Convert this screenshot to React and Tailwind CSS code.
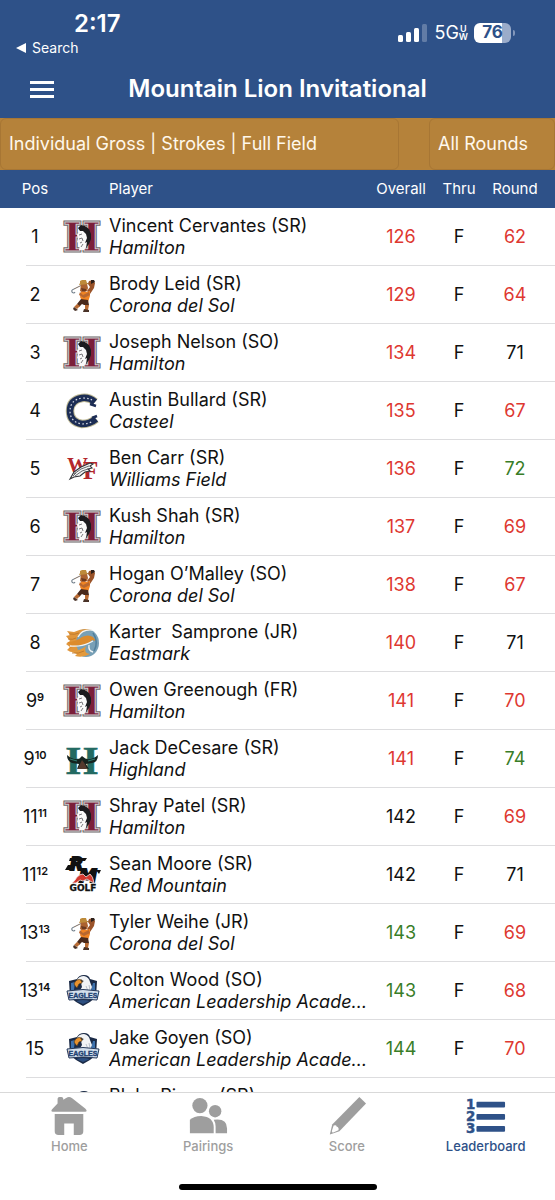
import React from "react";

const logoClass = "h-9 w-10 overflow-visible";

function HuskyH() {
  return (
    <svg viewBox="0 0 40 36" className={logoClass} aria-hidden="true">
      <g fontFamily="DejaVu Serif" fontWeight="700" fontSize="40" textAnchor="middle">
        <text x="20" y="32" fill="#6e6a6c" stroke="#6e6a6c" strokeWidth="3">H</text>
        <text x="20" y="32" fill="#7b1f3a" stroke="#cfcbcc" strokeWidth="1">H</text>
      </g>
      <path d="M20 8 L17 12 L15 16 L16 20 L15 23 L18 25 L17 31 L22 31 L25 27 L27 21 L26 13Z" fill="#f9f9f9" />
      <path d="M16 9 L19 6 L23 7 L27 10 L29 15 L29 20 L27 25 L24 29 L25 23 L23 24 L25 19 L24 15 L21 12 L18 12 Z" fill="#1b1b1e" />
      <path d="M17 16 L20 15 M17 20 L20 19 L21 22 M18 24 L20 23 M19 28 L21 25" fill="none" stroke="#6b6b6f" strokeWidth=".9" />
    </svg>
  );
}

function Golfer() {
  return (
    <svg viewBox="0 0 40 36" className={logoClass} aria-hidden="true">
      <path d="M31 5 L20 8 L12 12" fill="none" stroke="#6a5a50" strokeWidth=".9" />
      <path d="M12 12 Q9 13 10 15 Q12 17 13 15" fill="none" stroke="#73808c" strokeWidth="1.1" />
      <path d="M27 4 L31 3 L33 6 L32 11 L28 17 L25 14 L28 10 L26 7Z" fill="#9a5329" />
      <path d="M29 3 L32 3 L33 5 L29 7Z" fill="#2e211b" />
      <path d="M19 7 L25 7 L26 11 L25 14 L21 16 L18 14Z" fill="#ab622f" />
      <path d="M18 4 L20 3 L22 3 L24 3 L25 6 L27 7 L17 8 L18 6Z" fill="#bd8a3a" />
      <path d="M19 11 L24 12 L24 14 L20 14Z" fill="#6b3a20" />
      <path d="M19 15 L24 15 L28 14 L28 19 L26 25 L20 24 L18 20 Z" fill="#f08424" />
      <path d="M18 15 L21 18 L27 15 L28 18 L22 21 L17 18Z" fill="#b8672f" />
      <path d="M19 22 L26 23 L27 28 L22 28 L20 27 L17 30 L15 27Z" fill="#4a2a1c" />
      <path d="M15 27 L18 29 L15 32 L12 30 Z M23 28 L27 28 L26 33 L23 33Z" fill="#b96b33" />
      <path d="M12 30 L16 33 L13 34 L11 32Z M22 32 L27 33 L27 35 L21 35Z" fill="#493227" />
    </svg>
  );
}

function Horseshoe() {
  return (
    <svg viewBox="0 0 40 36" className={logoClass} aria-hidden="true">
      <g fill="none">
        <path d="M33 9 Q27 4 20 5 Q8 7 8 18 Q8 29 20 31 Q28 31 34 26" stroke="#bdb894" strokeWidth="8.5" />
        <path d="M33 9 Q27 4 20 5 Q8 7 8 18 Q8 29 20 31 Q28 31 34 26" stroke="#1c2d55" strokeWidth="6.500" />
        <path d="M28 11 L34 13 M30 25 L35 23" stroke="#1c2d55" strokeWidth="2.500" />
        <path d="M30 7 Q26 5 20 5 Q8 7 8 18 Q8 29 20 31 Q27 31 31 28" stroke="#d8dce6" strokeWidth="1.200" strokeDasharray="1.600 2.200" />
      </g>
    </svg>
  );
}

function WilliamsField() {
  return (
    <svg viewBox="0 0 40 36" className={logoClass} aria-hidden="true">
      <g fontFamily="Liberation Serif" fontWeight="700" fill="#b3262b">
        <text x="5" y="21" fontSize="21">W</text>
        <text x="21" y="28" fontSize="25">F</text>
      </g>
      <path d="M8 28 L12 21 L19 16 L28 12 L31 13 L28 15 L30 17 L26 18 L28 20 L23 21 L18 25 L12 26Z" fill="#f4f4f4" stroke="#303236" strokeWidth="1.100" />
      <path d="M12 23 L19 18 L27 15 M13 25 L20 20 L26 18 M11 25 L14 22" stroke="#55595d" strokeWidth=".9" fill="none" />
    </svg>
  );
}

function Firebird() {
  return (
    <svg viewBox="0 0 40 36" className={logoClass} aria-hidden="true">
      <ellipse cx="24" cy="18" rx="13" ry="14" fill="#78a0b6" />
      <path d="M5 6 L12 7 Q22 2 30 5 Q21 5 16 11 Q12 17 16 25 Q11 29 5 25 L8 22 L4 19 L8 16 L4 11 L8 10Z" fill="#e0963c" />
      <path d="M5 17 Q14 17 20 12 Q26 9 31 12 L34 16 L30 15 Q27 20 19 20 Q11 21 7 24 L9 20Z" fill="#dc8b2c" />
      <path d="M7 26 Q17 27 24 21 Q21 28 28 29 Q21 33 13 31 L15 29Z" fill="#e39a3c" />
      <path d="M30 5 Q20 4 16 12 M8 21 Q19 22 27 18 L31 16 M27 20 Q26 26 31 27" fill="none" stroke="#f2f5f6" strokeWidth="1.300" />
      <path d="M7 9 Q13 10 17 8 M6 14 Q11 15 14 13 M10 28 Q17 29 22 26" fill="none" stroke="#b9742a" strokeWidth=".8" />
      <path d="M31 8 Q37 17 32 26" fill="none" stroke="#517f9c" strokeWidth="1.500" />
    </svg>
  );
}

function HawkH() {
  return (
    <svg viewBox="0 0 40 36" className={logoClass} aria-hidden="true">
      <text x="20" y="33" fontFamily="Liberation Serif" fontWeight="700" fontSize="41" textAnchor="middle" fill="#236a62" stroke="#236a62" strokeWidth=".6">H</text>
      <path d="M5 14 Q10 19 17 18 L20 15 L24 18 Q31 19 36 14 Q36 21 30 22 L24 23 L27 28 L21 27 L15 28 L17 23 L10 22 Q5 20 5 14Z" fill="#15231f" />
      <path d="M8 18 L15 20 M33 18 L26 20" stroke="#2f7b70" strokeWidth="1.300" />
      <path d="M18 23 L20 19 L23 23 L25 28 L16 28Z" fill="#54392d" />
    </svg>
  );
}

function RedMountain() {
  return (
    <svg viewBox="0 0 40 36" className={logoClass} aria-hidden="true">
      <g fontFamily="DejaVu Sans" fontWeight="700" fontStyle="oblique" fill="#111" stroke="#111" strokeWidth="2">
        <text x="8" y="13" fontSize="17">R</text>
        <text x="17" y="25" fontSize="18">M</text>
      </g>
      <path d="M8 1 H25 L23 4 H7Z M3 13 L6 8 H13 L10 13Z M34 13 H39 L37 17Z" fill="#111" />
      <path d="M10 26 Q13 24 15 20 Q18 17 21 17 L24 20 L28 17 Q31 19 32 26 L28 24 L25 22 L21 24 L18 23 L14 26Z" fill="#d2382e" stroke="#f2e6e4" strokeWidth=".8" />
      <text x="21" y="34" fontFamily="DejaVu Sans" fontWeight="700" fontSize="9" textAnchor="middle" fill="#111" stroke="#111" strokeWidth=".3">GOLF</text>
    </svg>
  );
}

function Eagles() {
  return (
    <svg viewBox="0 0 40 36" className={logoClass} aria-hidden="true">
      <path d="M7 8 L15 6 Q17 2 22 2 Q27 2 28 6 L35 8 L34 24 Q29 29 21 33 Q13 29 8 24Z" fill="#1a2a46" />
      <path d="M9 10 L13 9 L12 17 L9 17Z M31 10 L33 10 L33 17 L29 17Z" fill="#3e72ad" />
      <path d="M15 7 Q17 3 22 3 Q27 4 28 9 L30 14 L28 19 L17 19 L20 14 L19 10Z" fill="#f1f3f5" />
      <path d="M12 11 Q14 5 20 7 L20 10 L17 11 L15 15 Q13 13 12 11Z" fill="#e7922e" stroke="#49361f" strokeWidth=".7" />
      <path d="M18 7 L22 8 L20 9Z" fill="#222" />
      <path d="M24 13 L26 18 M27 12 L28 17" stroke="#a9b3bf" strokeWidth=".8" />
      <path d="M5 18 Q21 15 37 18 L35 27 Q21 25 7 27Z" fill="#d3dfec" stroke="#26395a" strokeWidth="1" />
      <text x="21" y="25" fontFamily="Liberation Sans" fontWeight="700" fontSize="7" textAnchor="middle" fill="#1f4373" stroke="#1f4373" strokeWidth=".4">EAGLES</text>
      <path d="M14 28 Q21 26 28 28 L21 31Z" fill="#2d4f80" />
    </svg>
  );
}

const HA = { school: "Hamilton", Logo: HuskyH };
const CS = { school: "Corona del Sol", Logo: Golfer };
const CA = { school: "Casteel", Logo: Horseshoe };
const WF = { school: "Williams Field", Logo: WilliamsField };
const EM = { school: "Eastmark", Logo: Firebird };
const HI = { school: "Highland", Logo: HawkH };
const RM = { school: "Red Mountain", Logo: RedMountain };
const AL = { school: "American Leadership Academy", Logo: Eagles };

const RED = "text-[#de3831]";
const GREEN = "text-[#397d27]";
const BLACK = "text-[#111111]";

// [position, tie-break, player, team, overall, overall colour, round, round colour]
const players = [
  ["1", "", "Vincent Cervantes (SR)", HA, 126, RED, 62, RED],
  ["2", "", "Brody Leid (SR)", CS, 129, RED, 64, RED],
  ["3", "", "Joseph Nelson (SO)", HA, 134, RED, 71, BLACK],
  ["4", "", "Austin Bullard (SR)", CA, 135, RED, 67, RED],
  ["5", "", "Ben Carr (SR)", WF, 136, RED, 72, GREEN],
  ["6", "", "Kush Shah (SR)", HA, 137, RED, 69, RED],
  ["7", "", "Hogan O’Malley (SO)", CS, 138, RED, 67, RED],
  ["8", "", "Karter  Samprone (JR)", EM, 140, RED, 71, BLACK],
  ["9", "9", "Owen Greenough (FR)", HA, 141, RED, 70, RED],
  ["9", "10", "Jack DeCesare (SR)", HI, 141, RED, 74, GREEN],
  ["11", "11", "Shray Patel (SR)", HA, 142, BLACK, 69, RED],
  ["11", "12", "Sean Moore (SR)", RM, 142, BLACK, 71, BLACK],
  ["13", "13", "Tyler Weihe (JR)", CS, 143, GREEN, 69, RED],
  ["13", "14", "Colton Wood (SO)", AL, 143, GREEN, 68, RED],
  ["15", "", "Jake Goyen (SO)", AL, 144, GREEN, 70, RED],
  ["", "", "Blake Pierce (SR)", AL, "", BLACK, "", BLACK],
];

function PlayerRow({ row }) {
  const [pos, tie, name, team, overall, overallColor, round, roundColor] = row;
  const { Logo, school } = team;
  return (
    <tr className="h-[58px]">
      <td className="relative p-0 pl-2 text-center after:absolute after:bottom-0 after:left-[26px] after:h-px after:w-screen after:bg-[#dddddf]">
        {pos}
        {tie && <sup className="-top-1.5 text-[11px] font-semibold">{tie}</sup>}
      </td>
      <td className="p-0"><Logo /></td>
      <td className="p-0 pl-1.5 leading-[22px]">
        <div className="truncate whitespace-pre">{name}</div>
        <div className="truncate italic">{school}</div>
      </td>
      <td className={`p-0 text-center ${overallColor}`}>{overall}</td>
      <td className="p-0 text-center">{overall && "F"}</td>
      <td className={`p-0 pr-3 text-center ${roundColor}`}>{round}</td>
    </tr>
  );
}

function StatusBar() {
  return (
    <div className="flex h-[60px] items-start justify-between pr-10 pl-4">
      <div className="flex flex-col pt-2.5">
        <time className="pl-[58px] text-2xl leading-7 font-semibold">2:17</time>
        <a href="#search" className="flex items-center gap-1.5 text-sm leading-5">
          <svg viewBox="0 0 10 10" className="size-2.5" aria-hidden="true"><path d="M0 5 L10 0 V10Z" fill="currentColor" /></svg>
          Search
        </a>
      </div>
      <div className="mt-[23px] flex h-5 items-center">
        <svg viewBox="0 0 30 18" className="h-[18px] w-[30px]" fill="currentColor" aria-label="Signal">
          <rect x="0" y="11" width="5" height="7" rx="1.500" />
          <rect x="8" y="8" width="5" height="10" rx="1.500" />
          <rect x="16" y="4" width="5" height="14" rx="1.500" />
          <rect x="24" y="0" width="5" height="18" rx="1.500" opacity=".25" />
        </svg>
        <span className="ml-1.5 text-lg leading-5">5G</span>
        <span className="flex flex-col items-center text-[9px] leading-[8px] font-semibold"><span>U</span><span>W</span></span>
        <span className="ml-1.5 flex h-5 w-[37px] items-center justify-center rounded-md bg-linear-to-r from-white from-76% to-[#9bacca] to-76% text-[17px] font-bold text-[#2e5188]">76</span>
        <span className="ml-0.5 h-1.5 w-0.5 rounded-r bg-[#8297bb]" />
      </div>
    </div>
  );
}

function HomeIcon() {
  return (
    <svg viewBox="0 0 40 42" className="h-10 w-10" fill="currentColor" aria-hidden="true">
      <path d="M8 8 V3 Q8 1 10 1 H12 Q14 1 14 3 V4 L17 2 Q20 0 23 2 L37 13 Q40 16 37 16.500 H3 Q0 16 3 13Z" />
      <path d="M5 19 H35 V37 Q35 41 31 41 H25 V29 H15 V41 H9 Q5 41 5 37Z" />
    </svg>
  );
}

function PairingsIcon() {
  return (
    <svg viewBox="0 0 40 42" className="h-10 w-10" fill="currentColor" aria-hidden="true">
      <circle cx="11.500" cy="10" r="8" />
      <circle cx="27.500" cy="16" r="6.500" />
      <path d="M1 39 V25 Q5 21 13 21 Q26 22 26 33 V39Z" />
      <path d="M28 39 V32 Q28 28 26 25 Q40 23 40 34 V39Z" />
    </svg>
  );
}

function PencilIcon() {
  return (
    <svg viewBox="0 0 40 42" className="h-10 w-10" fill="currentColor" aria-hidden="true">
      <path d="M33 1 L40 8 L12 37 L2 40.500 L4.500 30Z" />
      <path d="M6 31 Q9 30 9 32 Q12 33 11 36 L5 38.500 L4 37Z" fill="#fff" />
    </svg>
  );
}

function LeaderboardIcon() {
  return (
    <svg viewBox="0 0 40 42" className="h-10 w-10 overflow-visible" fill="currentColor" aria-hidden="true">
      <g fontFamily="DejaVu Sans" fontWeight="700" fontSize="14" stroke="currentColor" strokeWidth=".5">
        <text x="-1" y="14">1</text>
        <text x="-1" y="26.500">2</text>
        <text x="-1" y="39">3</text>
      </g>
      <rect x="10" y="6" width="30" height="6" rx="1" />
      <rect x="10" y="19" width="30" height="6" rx="1" />
      <rect x="10" y="31.500" width="30" height="6" rx="1" />
    </svg>
  );
}

const tabs = [
  ["Home", HomeIcon],
  ["Pairings", PairingsIcon],
  ["Score", PencilIcon],
  ["Leaderboard", LeaderboardIcon],
];

export default function App() {
  return (
    <div className="flex h-screen flex-col bg-white font-['Inter',sans-serif] text-[#111111]">
      <header className="bg-[#2e5188] text-white">
        <StatusBar />
        <div className="grid h-[58px] grid-cols-[84px_1fr_84px] items-center">
          <button aria-label="Menu" className="flex w-[54px] flex-col gap-1 pl-[30px]">
            <span className="h-[3px] bg-white" />
            <span className="h-[3px] bg-white" />
            <span className="h-[3px] bg-white" />
          </button>
          <h1 className="text-center text-2xl font-semibold whitespace-nowrap">Mountain Lion Invitational</h1>
        </div>
      </header>

      <div className="flex h-[52px] justify-between gap-[30px] bg-[#b5823a] text-lg text-[#fff8ec]">
        <select aria-label="Leaderboard type" className="min-w-0 flex-1 appearance-none rounded-md border border-[#a77634] bg-transparent px-2">
          <option>Individual Gross | Strokes | Full Field</option>
        </select>
        <select aria-label="Rounds" className="w-[126px] appearance-none rounded-md border border-[#a77634] bg-transparent px-2">
          <option>All Rounds</option>
        </select>
      </div>

      <main className="min-h-0 flex-1 overflow-hidden">
        <table className="w-full table-fixed border-collapse text-lg">
          <colgroup>
            <col className="w-[62px]" />
            <col className="w-[41px]" />
            <col />
            <col className="w-[60px]" />
            <col className="w-[56px]" />
            <col className="w-[68px]" />
          </colgroup>
          <thead className="bg-[#2e5188] text-[15px] text-white">
            <tr className="h-[38px]">
              <th className="p-0 pl-2 font-normal">Pos</th>
              <th className="p-0" aria-label="Team" />
              <th className="p-0 pl-1.5 text-left font-normal">Player</th>
              <th className="p-0 font-normal">Overall</th>
              <th className="p-0 font-normal">Thru</th>
              <th className="p-0 pr-3 font-normal">Round</th>
            </tr>
          </thead>
          <tbody>
            {players.map((row) => (
              <PlayerRow key={row[2]} row={row} />
            ))}
          </tbody>
        </table>
      </main>

      <nav className="flex h-[108px] flex-col justify-between border-t border-[#d9d9d9] bg-white pb-2.5">
        <div className="grid grid-cols-4 pt-[3px]">
          {tabs.map(([label, Icon]) => (
            <a
              key={label}
              href={`#${label.toLowerCase()}`}
              className={`flex flex-col items-center text-[13px] leading-5 font-medium ${label === "Leaderboard" ? "text-[#2e5188]" : "text-[#9e9e9e]"}`}
            >
              <Icon />
              {label}
            </a>
          ))}
        </div>
        <div className="h-1.5 w-[198px] self-center rounded-full bg-black" />
      </nav>
    </div>
  );
}
